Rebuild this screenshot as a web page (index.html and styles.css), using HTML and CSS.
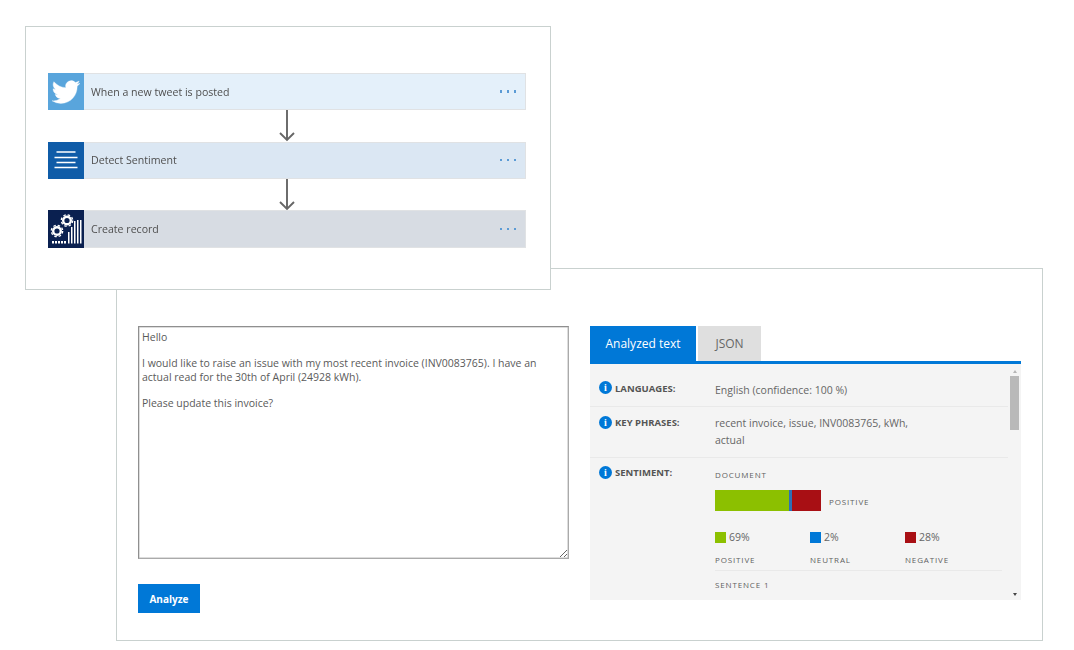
FILE: index.html
```html
<!DOCTYPE html>
<html lang="en">
<head>
<meta charset="utf-8">
<title>Sentiment flow</title>
<link rel="stylesheet" href="styles.css">
</head>
<body>
<main class="stage">
  <section class="card flow-card">
    <div class="flow-row row-twitter">
      <div class="flow-icon icon-twitter">
        <svg width="28" height="28" viewBox="0 0 24 24"><path fill="#fff" stroke="#fff" stroke-width="0.3" d="M23.95 4.57a10 10 0 0 1-2.82.77 4.96 4.96 0 0 0 2.16-2.72c-.95.55-2 .96-3.13 1.19a4.92 4.92 0 0 0-8.38 4.48C7.69 8.1 4.07 6.13 1.64 3.16a4.82 4.82 0 0 0-.67 2.48c0 1.71.87 3.21 2.19 4.1a4.9 4.9 0 0 1-2.23-.62v.06a4.92 4.92 0 0 0 3.95 4.83 5 5 0 0 1-2.21.08 4.94 4.94 0 0 0 4.6 3.42A9.87 9.87 0 0 1 0 19.54a14 14 0 0 0 7.56 2.21c9.05 0 14-7.5 14-13.98 0-.21 0-.42-.02-.63a9.94 9.94 0 0 0 2.46-2.55z"/></svg>
      </div>
      <span class="flow-label">When a new tweet is posted</span>
      <span class="flow-more"><i></i><i></i><i></i></span>
    </div>
    <div class="flow-arrow">
      <svg width="18" height="32" viewBox="0 0 18 32"><path d="M9 0V30M2 23l7 7 7-7" fill="none" stroke="#666" stroke-width="1.9"/></svg>
    </div>
    <div class="flow-row row-sentiment">
      <div class="flow-icon icon-sentiment">
        <svg width="26" height="20" viewBox="0 0 26 20"><path d="M3.500 2H22.500M1.500 7.500H24.500M3.500 12.500H22.500M1.500 17.500H24.500" fill="none" stroke="#fff" stroke-width="1.500"/></svg>
      </div>
      <span class="flow-label">Detect Sentiment</span>
      <span class="flow-more"><i></i><i></i><i></i></span>
    </div>
    <div class="flow-arrow">
      <svg width="18" height="32" viewBox="0 0 18 32"><path d="M9 0V30M2 23l7 7 7-7" fill="none" stroke="#666" stroke-width="1.9"/></svg>
    </div>
    <div class="flow-row row-record">
      <div class="flow-icon icon-record">
        <svg width="36" height="36" viewBox="0 0 36 36">
          <g fill="none" stroke="#fff">
            <circle cx="9" cy="20" r="3.800" stroke-width="2.400"/>
            <circle cx="9" cy="20" r="5.700" stroke-width="1.300" stroke-dasharray="2.500 1.980"/>
            <circle cx="19" cy="9.500" r="3.800" stroke-width="2.400"/>
            <circle cx="19" cy="9.500" r="5.700" stroke-width="1.300" stroke-dasharray="2.500 1.980"/>
          </g>
          <path fill="#fff" d="M4 30h2v2.500H4zM7 30h2v2.500H7zM10 30h2v2.500h-2zM13 30h2v2.500h-2zM16 30h2v2.500h-2zM20 21h1.500v11.500H20zM23 16h1.500v16.500H23zM26 10h1.500v22.500H26zM29 9h1.500v23.500H29zM32 9h1.500v23.500H32z"/>
        </svg>
      </div>
      <span class="flow-label">Create record</span>
      <span class="flow-more"><i></i><i></i><i></i></span>
    </div>
  </section>

  <section class="card analyze-card">
    <div class="input-col">
      <textarea class="message" spellcheck="false">Hello

I would like to raise an issue with my most recent invoice (INV0083765). I have an actual read for the 30th of April (24928 kWh).

Please update this invoice?</textarea>
      <button class="analyze-btn" type="button">Analyze</button>
    </div>
    <div class="result-col">
      <div class="tabs">
        <div class="tab tab-active">Analyzed text</div>
        <div class="tab">JSON</div>
      </div>
      <div class="panel">
        <div class="panel-body">
          <div class="result-row row-lang">
            <div class="result-key"><span class="info">i</span>LANGUAGES:</div>
            <div class="result-val">English (confidence: 100 %)</div>
          </div>
          <div class="result-row row-phrases">
            <div class="result-key"><span class="info">i</span>KEY PHRASES:</div>
            <div class="result-val phrases">recent invoice, issue, INV0083765, kWh, actual</div>
          </div>
          <div class="result-row row-sent">
            <div class="result-key"><span class="info">i</span>SENTIMENT:</div>
            <div class="sent">
              <div class="caps">DOCUMENT</div>
              <div class="bar-line">
                <div class="bar">
                  <span class="seg seg-pos"></span><span class="seg seg-neu"></span><span class="seg seg-neg"></span>
                </div>
                <span class="caps">POSITIVE</span>
              </div>
              <div class="scores">
                <div class="score">
                  <div class="pct"><span class="swatch swatch-pos"></span>69%</div>
                  <div class="caps">POSITIVE</div>
                </div>
                <div class="score">
                  <div class="pct"><span class="swatch swatch-neu"></span>2%</div>
                  <div class="caps">NEUTRAL</div>
                </div>
                <div class="score">
                  <div class="pct"><span class="swatch swatch-neg"></span>28%</div>
                  <div class="caps">NEGATIVE</div>
                </div>
              </div>
              <div class="caps sentence">SENTENCE 1</div>
            </div>
          </div>
        </div>
        <div class="scrollbar">
          <span class="arrow arrow-up"></span>
          <span class="thumb"></span>
          <span class="arrow arrow-down"></span>
        </div>
      </div>
    </div>
  </section>
</main>
</body>
</html>
```
FILE: styles.css
```css
* { box-sizing: border-box; }
html, body { margin: 0; padding: 0; background: #fff; }
body { font-family: "Open Sans", "Noto Sans", "Liberation Sans", sans-serif; color: #5f5f5f; overflow: hidden; }

.stage { position: relative; width: 1074px; height: 650px; padding: 268px 0 0 116px; filter: blur(0.35px); }

.card { background: #fff; border: 1px solid #c9d1cf; }

.flow-card {
  position: absolute; left: 25px; top: 26px; z-index: 2;
  width: 526px; height: 264px;
  padding: 46px 24px 0 22px;
  display: flex; flex-direction: column;
}
.flow-row {
  height: 37px; display: flex; align-items: center;
  border: 1px solid #e0e2e4; border-left: 0;
}
.row-twitter { background: #e4f0fa; }
.row-sentiment { background: #dbe7f3; }
.row-record { background: #d7dce3; height: 38px; }
.flow-icon { width: 36px; align-self: stretch; margin: -1px 0; flex: none; display: flex; align-items: center; justify-content: center; }
.icon-twitter { background: #59a5dc; }
.icon-sentiment { background: #0f5ca8; }
.icon-record { background: #0a2050; }
.flow-label { margin-left: 7px; font-size: 10.600px; color: #4f4f4f; flex: 1; }
.flow-more { display: flex; gap: 4.500px; margin-right: 9px; }
.flow-more i { display: block; width: 2.500px; height: 2.500px; background: #5b9bd5; }
.flow-arrow { height: 31.500px; display: flex; justify-content: center; padding-right: 1px; }
.flow-arrow svg { display: block; }

.analyze-card {
  width: 927px; height: 373px;
  padding: 57px 21px 0 21px;
  display: flex; gap: 21px;
}
.input-col { width: 431px; flex: none; display: flex; flex-direction: column; align-items: flex-start; }
.message {
  width: 431px; height: 233px; margin: 0;
  border: 1px solid #8f8f8f; border-bottom-color: #aaa; border-right-color: #aaa;
  box-shadow: inset 0 0 0 0.5px #bbb;
  padding: 4px 3px; outline: 0;
  font: 10.500px/13.200px "Open Sans", "Noto Sans", sans-serif; color: #5a5a5a;
  resize: both; display: block;
}
.analyze-btn {
  margin-top: 25px; width: 62px; height: 29px; border: 0; padding: 0;
  background: #0078d7; color: #fff;
  font: 700 10px "Open Sans", "Noto Sans", sans-serif;
}

.result-col { width: 431px; flex: none; height: 274px; display: flex; flex-direction: column; }
.tabs { display: flex; gap: 2px; height: 38px; border-bottom: 3px solid #0078d7; flex: none; }
.tab { width: 63px; background: #dfdfdf; color: #666; font-size: 12px; display: flex; align-items: center; justify-content: center; }
.tab-active { width: 106px; background: #0078d7; color: #fff; }

.panel { flex: 1; min-height: 0; background: #f4f4f4; display: flex; overflow: hidden; }
.panel-body { flex: 1; min-width: 0; }
.scrollbar { width: 13px; flex: none; display: flex; flex-direction: column; align-items: center; padding: 6px 0 4px; }
.thumb { width: 9px; height: 54px; margin-top: 3px; background: #b9b9b9; }
.arrow { width: 0; height: 0; border-left: 2.500px solid transparent; border-right: 2.500px solid transparent; }
.arrow-up { border-bottom: 3px solid #b5b5b5; }
.arrow-down { margin-top: auto; border-top: 3px solid #444; }

.result-row { display: flex; border-bottom: 1px solid #e9e9e9; }
.row-lang { height: 43px; padding-top: 18px; }
.row-phrases { height: 51px; padding-top: 9px; }
.row-sent { border-bottom: 0; padding-top: 8px; }
.result-key { width: 125px; flex: none; padding-left: 9px; display: flex; align-items: flex-start; font-size: 9.500px; font-weight: 700; color: #555; line-height: 13px; }
.info {
  width: 13px; height: 13px; border-radius: 50%; background: #0078d7; color: #fff;
  font: 700 10px/13px "Liberation Serif", serif; text-align: center; margin-right: 3px; flex: none;
}
.row-lang .info { margin-top: -1px; }
.row-lang .result-val { margin-top: 0; }
.result-val { font-size: 10.500px; line-height: 17px; color: #666; margin-top: -1px; }
.phrases { width: 215px; }
.sent { width: 287px; padding-top: 3px; }
.caps { font-size: 8px; letter-spacing: 0.850px; color: #5f5f5f; line-height: 12px; }
.bar-line { display: flex; align-items: center; gap: 8px; margin-top: 9px; }
.bar-line .caps { padding-top: 3px; }
.bar { display: flex; width: 106px; height: 21px; flex: none; }
.seg { display: block; height: 100%; }
.seg-pos { width: 74px; background: #8cc000; }
.seg-neu { width: 3px; background: #2d6fb5; }
.seg-neg { flex: 1; background: #a80f14; }
.scores { display: flex; margin-top: 19px; padding-bottom: 4px; border-bottom: 1px solid #e9e9e9; }
.score { width: 95px; }
.pct { font-size: 10.500px; line-height: 14px; color: #666; display: flex; align-items: center; margin-bottom: 10px; }
.swatch { width: 11px; height: 11px; margin-right: 3px; flex: none; }
.swatch-pos { background: #8cc000; }
.swatch-neu { background: #0078d7; }
.swatch-neg { background: #a80f14; }
.sentence { margin-top: 8px; }
```
